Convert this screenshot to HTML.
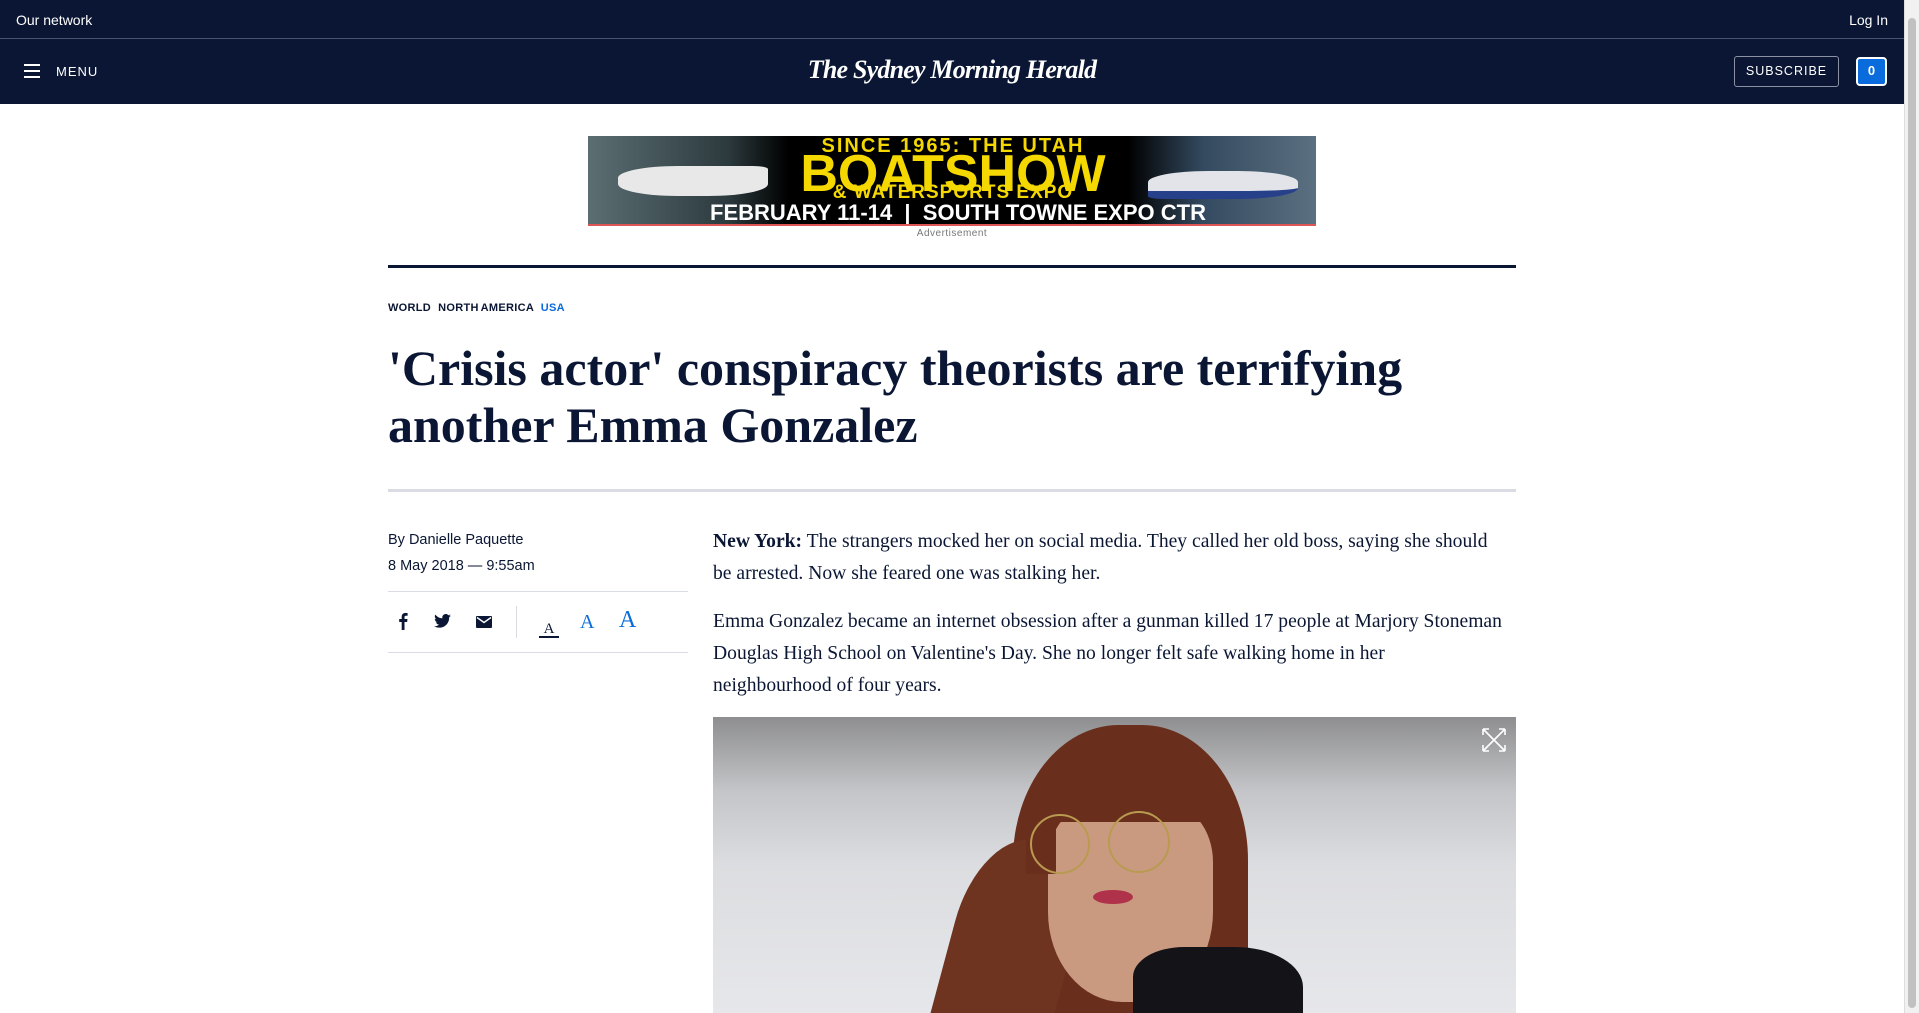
<!DOCTYPE html>
<html><head><meta charset="utf-8"><style>
*{margin:0;padding:0;box-sizing:border-box}
body{width:1919px;height:1013px;overflow:hidden;background:#fff;font-family:"Liberation Sans",sans-serif;position:relative}
.top{position:absolute;left:0;top:0;width:1904px;height:39px;background:#0a1633;border-bottom:1px solid #4a5470;color:#fff;font-size:14px}
.hdr{position:absolute;left:0;top:39px;width:1904px;height:65px;background:#0a1633;color:#fff}
.sb{position:absolute;right:0;top:0;width:15px;height:1013px;background:#f1f1f1;border-left:1px solid #ddd}
.sb i{position:absolute;left:3px;top:18px;width:8px;height:990px;background:#c1c1c1;border-radius:4px}
.abs{position:absolute}
.bc{font-size:11px;font-weight:bold;letter-spacing:.3px;color:#0a1633;word-spacing:-1px}
h1{position:absolute;left:388px;top:340px;font-family:"Liberation Serif",serif;font-weight:bold;font-size:50px;line-height:57px;color:#0a1633;letter-spacing:0;white-space:nowrap}
.body{position:absolute;left:713px;font-family:"Liberation Serif",serif;font-size:19.6px;line-height:32px;color:#0a1633;white-space:nowrap}
</style></head><body>
<div class="top"><span class="abs" style="left:16px;top:12px">Our network</span><span class="abs" style="right:16px;top:12px">Log In</span></div>
<div class="hdr">
 <div class="abs" style="left:24px;top:25px;width:16px;height:2px;background:#fff;box-shadow:0 6px 0 #fff,0 12px 0 #fff"></div>
 <span class="abs" style="left:56px;top:25px;font-size:13px;letter-spacing:1px">MENU</span>
 <div class="abs" style="left:752px;top:16px;width:400px;text-align:center;font-family:'Liberation Serif',serif;font-weight:bold;font-style:italic;font-size:26px;letter-spacing:-.8px;white-space:nowrap">The Sydney Morning Herald</div>
 <div class="abs" style="left:1734px;top:17px;width:105px;height:31px;border:1px solid #8a91a3;border-radius:3px;font-size:12.5px;letter-spacing:1px;text-align:center;line-height:29px">SUBSCRIBE</div>
 <div class="abs" style="left:1856px;top:18px;width:31px;height:29px;background:#0a6cdc;border:2px solid #fff;border-radius:4px;font-size:13px;font-weight:bold;text-align:center;line-height:24px">0</div>
</div>
<div class="sb"><i></i></div>
<!-- ad -->
<div class="abs" style="left:588px;top:136px;width:728px;height:90px;background:#000;overflow:hidden;border-bottom:2px solid #d55">
 <div class="abs" style="left:0;top:0;width:200px;height:90px;background:linear-gradient(90deg,#5b6e72,#2c3a3e 70%,#000)"></div>
 <div class="abs" style="left:30px;top:30px;width:150px;height:30px;background:#e8e8e8;border-radius:40% 10% 40% 40%"></div>
 <div class="abs" style="left:540px;top:0;width:188px;height:90px;background:linear-gradient(90deg,#000,#344a60 40%,#5b7080)"></div>
 <div class="abs" style="left:560px;top:35px;width:150px;height:28px;background:#e2e4ea;border-radius:40% 40% 40% 10%;border-bottom:8px solid #27408a"></div>
 <div class="abs" style="left:190px;top:0;width:350px;text-align:center;color:#f5d800;font-weight:bold;font-size:20px;line-height:20px;letter-spacing:2px">SINCE 1965: THE UTAH</div>
 <div class="abs" style="left:190px;top:12px;width:350px;text-align:center;color:#f5d800;font-weight:bold;font-size:52px;line-height:52px">BOATSHOW</div>
 <div class="abs" style="left:190px;top:46px;width:350px;text-align:center;color:#f5d800;font-weight:bold;font-size:19px;letter-spacing:1px">&amp; WATERSPORTS EXPO</div>
 <div class="abs" style="left:100px;top:64px;width:540px;text-align:center;color:#fff;font-weight:bold;font-size:22px;line-height:26px;white-space:nowrap">FEBRUARY 11-14 &nbsp;|&nbsp; SOUTH TOWNE EXPO CTR</div>
</div>
<div class="abs" style="left:588px;top:228px;width:728px;text-align:center;font-size:10px;color:#777;letter-spacing:.5px">Advertisement</div>
<div class="abs" style="left:388px;top:265px;width:1128px;height:3px;background:#0a1633"></div>
<div class="abs bc" style="left:388px;top:302px">WORLD &nbsp;&nbsp;NORTH AMERICA &nbsp;&nbsp;<span style="color:#0a6cdc">USA</span></div>
<h1>'Crisis actor' conspiracy theorists are terrifying<br>another Emma Gonzalez</h1>
<div class="abs" style="left:388px;top:489px;width:1128px;height:3px;background:#d9dce3"></div>
<div class="abs" style="left:388px;top:527px;font-size:14.5px;line-height:26px;color:#0a1633">By Danielle Paquette<br>8 May 2018 — 9:55am</div>
<div class="abs" style="left:388px;top:591px;width:300px;height:1px;background:#d9dce3"></div>
<div class="abs" style="left:388px;top:652px;width:300px;height:1px;background:#d9dce3"></div>
<div class="abs" style="left:516px;top:606px;width:1px;height:32px;background:#d9dce3"></div>
<svg class="abs" style="left:396px;top:612px" width="14" height="18" viewBox="0 0 10 18"><path d="M6.5 18V10h2.6l.4-3H6.5V5.2c0-.9.3-1.5 1.5-1.5H9.6V1.1C9.3 1 8.4 1 7.4 1 5.2 1 3.7 2.3 3.7 4.8V7H1.2v3h2.5v8z" fill="#0a1633"/></svg>
<svg class="abs" style="left:434px;top:614px" width="17" height="14" viewBox="0 0 24 20"><path d="M24 2.4c-.9.4-1.8.7-2.8.8 1-.6 1.8-1.6 2.2-2.7-1 .6-2 1-3.1 1.2A4.9 4.9 0 0 0 11.9 6.2 14 14 0 0 1 1.7.9a4.9 4.9 0 0 0 1.5 6.6c-.8 0-1.6-.3-2.2-.6 0 2.4 1.700 4.4 3.9 4.8-.7.2-1.5.2-2.2.1.6 2 2.4 3.4 4.6 3.4A9.9 9.9 0 0 1 0 17.3 14 14 0 0 0 7.5 19.5c9.1 0 14-7.5 14-14v-.6c1-.7 1.8-1.6 2.5-2.5z" fill="#0a1633"/></svg>
<svg class="abs" style="left:476px;top:616px" width="16" height="12" viewBox="0 0 16 12"><rect width="16" height="12" rx="1" fill="#0a1633"/><path d="M1 1.5l7 5 7-5" stroke="#fff" stroke-width="1.4" fill="none"/></svg>
<div class="abs" style="left:539px;top:614px;width:20px;height:24px;border-bottom:2px solid #0a1633;font-family:'Liberation Serif',serif;font-size:15px;text-align:center;color:#0a1633;line-height:30px">A</div>
<div class="abs" style="left:580px;top:611px;font-family:'Liberation Serif',serif;font-size:20px;color:#0a6cdc">A</div>
<div class="abs" style="left:619px;top:607px;font-family:'Liberation Serif',serif;font-size:24px;color:#0a6cdc">A</div>
<div class="body" style="top:526px"><b>New York:</b> The strangers mocked her on social media. They called her old boss, saying she should<br>be arrested. Now she feared one was stalking her.</div>
<div class="body" style="top:606px">Emma Gonzalez became an internet obsession after a gunman killed 17 people at Marjory Stoneman<br>Douglas High School on Valentine's Day. She no longer felt safe walking home in her<br>neighbourhood of four years.</div>
<!-- photo -->
<div class="abs" style="left:713px;top:717px;width:803px;height:296px;overflow:hidden;background:linear-gradient(180deg,#8e8e90 0%,#c4c5c8 25%,#dcdde0 50%,#e6e7ea 100%)">
 <div class="abs" style="left:300px;top:8px;width:235px;height:300px;background:#6a2f1c;border-radius:45% 45% 20% 20%"></div>
 <div class="abs" style="left:240px;top:120px;width:120px;height:200px;background:#6e3420;border-radius:50% 0 0 0;transform:rotate(15deg)"></div>
 <div class="abs" style="left:335px;top:85px;width:165px;height:200px;background:#c99a80;border-radius:30% 30% 45% 45%"></div>
 <div class="abs" style="left:335px;top:70px;width:165px;height:35px;background:#6a2f1c"></div>
 <div class="abs" style="left:313px;top:97px;width:30px;height:60px;background:#6a2f1c"></div>
 <div class="abs" style="left:317px;top:97px;width:60px;height:60px;border:2px solid #b89a50;border-radius:50%"></div>
 <div class="abs" style="left:395px;top:94px;width:62px;height:62px;border:2px solid #b89a50;border-radius:50%"></div>
 <div class="abs" style="left:380px;top:173px;width:40px;height:14px;background:#b0324a;border-radius:50%"></div>
 <div class="abs" style="left:420px;top:230px;width:170px;height:100px;background:#141418;border-radius:30% 40% 0 0"></div>
 <svg class="abs" style="left:768px;top:10px" width="26" height="26" viewBox="0 0 26 26" fill="none" stroke="#fff" stroke-width="1.6"><path d="M2 2L24 24M24 2L2 24M2 2h6M2 2v6M24 2h-6M24 2v6M2 24h6M2 24v-6M24 24h-6M24 24v-6"/></svg>
</div>
</body></html>
